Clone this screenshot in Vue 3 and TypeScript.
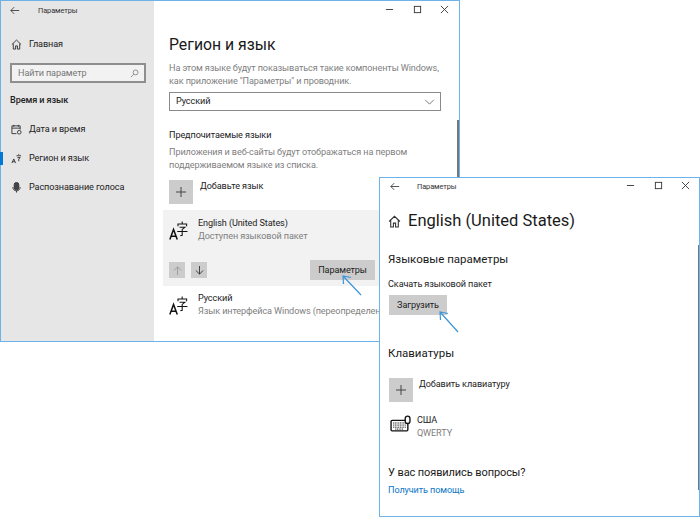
<script setup lang="ts">
    // two overlapping Windows 10 settings windows, with arrows pointing at the buttons

    interface NavItem {
        id: string;
        label: string;
        active?: boolean;
    }

    const navItems: NavItem[] = [
        { id: "date", label: "Дата и время" },
        { id: "region", label: "Регион и язык", active: true },
        { id: "voice", label: "Распознавание голоса" },
    ];
</script>

<template>
    <div class="desktop">
        <!-- back window -->
        <section class="window back">
            <aside class="sidebar">
                <div class="titlebar side-title">
                    <svg class="back-arrow" viewBox="0 0 12 10"><path d="M11 5H1M5 1 1 5l4 4" /></svg>
                    <span class="title-text">Параметры</span>
                </div>
                <div class="home-row">
                    <svg class="nav-icon" viewBox="0 0 12 12"><path d="M1 6 6 1.200 11 6M2.500 5v6h2.500V7.500h2V11h2.500V5" /></svg>
                    <span>Главная</span>
                </div>
                <div class="search">
                    <span>Найти параметр</span>
                    <svg viewBox="0 0 10 10"><circle cx="6.200" cy="3.800" r="2.700" /><path d="M4.200 5.800 1 9" /></svg>
                </div>
                <div class="group-title">Время и язык</div>
                <div v-for="item in navItems" :key="item.id" class="nav-item" :class="{ active: item.active }">
                    <svg v-if="item.id === 'date'" class="nav-icon" viewBox="0 0 12 12">
                        <path d="M6 10.500H1V2h9v4M1 4.500h9M3 1v2M8 1v2" />
                        <circle cx="9" cy="9" r="2" />
                    </svg>
                    <svg v-else-if="item.id === 'region'" class="nav-icon" viewBox="0 0 12 12">
                        <path d="M1 11 3 6.500 5 11M1.800 9.500h2.400M6 3h5M8.500 1v1M7 5h3L8.500 6.500V9" />
                    </svg>
                    <svg v-else class="nav-icon" viewBox="0 0 12 12">
                        <rect x="3.500" y="0.500" width="5" height="8" rx="2.500" fill="#444" />
                        <path d="M2 5.500c0 5.500 8 5.500 8 0M6 9.500V11.500" />
                    </svg>
                    <span>{{ item.label }}</span>
                </div>
            </aside>

            <main class="content">
                <div class="controls">
                    <svg viewBox="0 0 10 10"><path d="M1 5h8" /></svg>
                    <svg viewBox="0 0 10 10"><rect x="1.500" y="1.500" width="7" height="7" /></svg>
                    <svg viewBox="0 0 10 10"><path d="m1 1 8 8M9 1 1 9" /></svg>
                </div>
                <div class="scrollbar back-scroll"></div>
                <h1 class="page-title region">Регион и язык</h1>
                <p class="muted desc">На этом языке будут показываться такие компоненты Windows,<br />как приложение "Параметры" и проводник.</p>
                <div class="select">
                    <span>Русский</span>
                    <svg viewBox="0 0 12 7"><path d="M1 1l5 5 5-5" /></svg>
                </div>
                <h2 class="sub-title">Предпочитаемые языки</h2>
                <p class="muted desc second">Приложения и веб-сайты будут отображаться на первом<br />поддерживаемом языке из списка.</p>
                <div class="add-row">
                    <div class="plus-box"><svg viewBox="0 0 10 10"><path d="M5 0v10M0 5h10" /></svg></div>
                    <span>Добавьте язык</span>
                </div>
                <div class="lang selected">
                    <div class="lang-head">
                        <svg class="lang-icon" viewBox="0 0 18 18">
                            <path class="glyph-a" d="M.800 17.500 4.300 8 7.800 17.500M2 14.500h4.600" />
                            <path d="M12.500 .500v2M8.500 5V2.800h8.200V5M10 6h5l-2.500 2v5.500l-1.800 .5M7.800 10h9.700" />
                        </svg>
                        <div class="lang-text">
                            <div>English (United States)</div>
                            <div class="muted">Доступен языковой пакет</div>
                        </div>
                    </div>
                    <div class="lang-actions">
                        <div class="arrow-box disabled"><svg viewBox="0 0 10 10"><path d="M5 10V1M1 5l4-4 4 4" /></svg></div>
                        <div class="arrow-box"><svg viewBox="0 0 10 10"><path d="M5 0v9M1 5l4 4 4-4" /></svg></div>
                        <div class="btn options">Параметры</div>
                    </div>
                </div>
                <div class="lang plain">
                    <div class="lang-head">
                        <svg class="lang-icon" viewBox="0 0 18 18">
                            <path class="glyph-a" d="M.800 17.500 4.300 8 7.800 17.500M2 14.500h4.600" />
                            <path d="M12.500 .500v2M8.500 5V2.800h8.200V5M10 6h5l-2.500 2v5.500l-1.800 .5M7.800 10h9.700" />
                        </svg>
                        <div class="lang-text">
                            <div>Русский</div>
                            <div class="muted nowrap">Язык интерфейса Windows (переопределено)</div>
                        </div>
                    </div>
                </div>
            </main>
        </section>

        <!-- front window -->
        <section class="window front">
            <div class="titlebar front-title">
                <svg class="back-arrow" viewBox="0 0 12 10"><path d="M11 5H1M5 1 1 5l4 4" /></svg>
                <span class="title-text">Параметры</span>
                <div class="controls front-controls">
                    <svg viewBox="0 0 10 10"><path d="M1 5h8" /></svg>
                    <svg viewBox="0 0 10 10"><rect x="1.500" y="1.500" width="7" height="7" /></svg>
                    <svg viewBox="0 0 10 10"><path d="m1 1 8 8M9 1 1 9" /></svg>
                </div>
            </div>
            <div class="scrollbar front-scroll"></div>
            <div class="front-body">
                <div class="front-heading">
                    <svg viewBox="0 0 12 12"><path d="M1 6 6 1.200 11 6M2.500 5v6h2.500V7.500h2V11h2.500V5" /></svg>
                    <h1 class="page-title">English (United States)</h1>
                </div>
                <h2 class="section-title first">Языковые параметры</h2>
                <p class="label">Скачать языковой пакет</p>
                <div class="btn download">Загрузить</div>
                <h2 class="section-title keyboards">Клавиатуры</h2>
                <div class="add-row front-add">
                    <div class="plus-box"><svg viewBox="0 0 10 10"><path d="M5 0v10M0 5h10" /></svg></div>
                    <span>Добавить клавиатуру</span>
                </div>
                <div class="keyboard">
                    <svg viewBox="0 0 20 16">
                        <rect x="1" y="5" width="16" height="10" rx="1" />
                        <path class="keys" d="M3 7.500h12M3 9.500h12M3 11.500h12M5 13.300h8" />
                        <rect class="mouse" x="14.500" y="1" width="4.500" height="7" rx="2.200" />
                    </svg>
                    <div class="lang-text">
                        <div>США</div>
                        <div class="muted">QWERTY</div>
                    </div>
                </div>
                <h2 class="section-title questions">У вас появились вопросы?</h2>
                <div class="help-link">Получить помощь</div>
            </div>
        </section>

        <!-- hand drawn pointers -->
        <svg class="pointers" viewBox="0 0 700 517">
            <path d="M361 295 343 276M343.500 284 343 276 351 277.500" />
            <path d="M458 332 440 312M440.500 320 440 312 448 313.500" />
        </svg>
    </div>
</template>

<style scoped>
    .desktop {
        position: relative;
        width: 700px;
        height: 517px;
        overflow: hidden;
        background-color: #fff;
        font-family: Roboto, "Noto Sans", sans-serif;
        font-size: 9.100px;
        letter-spacing: -0.100px;
        line-height: 13px;
        color: #222;
    }

    .window {
        position: absolute;
        box-sizing: border-box;
        background-color: #fff;
        border: 1.500px solid #6db3ea;
    }

    .back {
        left: 0;
        top: 0;
        width: 460px;
        height: 342px;
        display: flex;
    }

    .front {
        left: 379px;
        top: 177px;
        width: 321px;
        height: 340px;
    }

    svg {
        fill: none;
        stroke: #333;
        stroke-width: 1;
        flex-shrink: 0;
    }

    p, h1, h2 {
        margin: 0;
        font-weight: 400;
    }

    .muted {
        color: #808080;
    }

    .nowrap {
        white-space: nowrap;
    }

    .titlebar {
        display: flex;
        align-items: center;
    }

    .back-arrow {
        width: 10px;
        height: 9px;
    }

    .title-text {
        font-size: 7.400px;
        color: #333;
    }

    /* sidebar */
    .sidebar {
        width: 153px;
        flex-shrink: 0;
        background-color: #e6e6e6;
    }

    .side-title {
        height: 18px;
        padding-left: 9px;
        gap: 18px;
    }

    .home-row {
        display: flex;
        align-items: center;
        gap: 7px;
        margin: 16px 0 0 10px;
        height: 18px;
    }

    .nav-icon {
        width: 11px;
        height: 11px;
    }

    .search {
        box-sizing: border-box;
        display: flex;
        align-items: center;
        justify-content: space-between;
        width: 136px;
        height: 20px;
        margin: 10px 0 0 9px;
        padding: 0 5px 0 6px;
        background-color: #f2f2f2;
        border: 2px solid #8e8e8e;
        color: #777;
    }

    .search svg {
        width: 9px;
        height: 9px;
        stroke: #888;
    }

    .group-title {
        margin: 11px 0 8px 9px;
        font-weight: 500;
    }

    .nav-item {
        display: flex;
        align-items: center;
        gap: 7px;
        height: 29px;
        padding-left: 10px;
    }

    .nav-item.active {
        position: relative;
    }

    .nav-item.active::before {
        content: "";
        position: absolute;
        left: -1px;
        top: 8px;
        width: 3px;
        height: 13px;
        background-color: #0078d7;
    }

    /* main column of the back window */
    .content {
        position: relative;
        flex: 1;
        min-width: 0;
        padding-left: 15px;
    }

    .controls {
        position: absolute;
        top: 4px;
        right: 10px;
        display: flex;
        gap: 18.500px;
    }

    .controls svg {
        width: 9px;
        height: 9px;
    }

    .scrollbar {
        position: absolute;
        width: 2px;
        background-color: #777;
    }

    .back-scroll {
        right: 0;
        top: 119px;
        height: 58px;
    }

    .page-title {
        font-size: 16.500px;
        letter-spacing: 0;
        line-height: 24px;
        color: #1a1a1a;
    }

    .content > .page-title {
        margin-top: 32px;
    }

    .page-title.region {
        font-size: 15.800px;
    }

    .desc {
        margin-top: 5px;
        white-space: nowrap;
    }

    .select {
        box-sizing: border-box;
        display: flex;
        align-items: center;
        justify-content: space-between;
        width: 272px;
        height: 19px;
        margin-top: 4px;
        padding: 0 5px 0 6px;
        border: 1.500px solid #8a8a8a;
    }

    .select svg {
        width: 11px;
        height: 6px;
        stroke: #666;
    }

    .sub-title {
        margin-top: 18px;
        font-size: 9.100px;
    }

    .desc.second {
        margin-top: 4px;
    }

    .add-row {
        display: flex;
        align-items: flex-start;
        gap: 6px;
        margin-top: 8px;
    }

    .plus-box {
        display: flex;
        align-items: center;
        justify-content: center;
        width: 24px;
        height: 24px;
        margin-right: 1px;
        background-color: #ccc;
    }

    .plus-box svg {
        width: 10px;
        height: 10px;
        stroke: #444;
    }

    .lang {
        margin-left: -6px;
        padding-left: 6px;
    }

    .selected {
        width: 230px;
        height: 76px;
        margin-top: 6px;
        background-color: #f2f2f2;
    }

    .lang-head {
        display: flex;
        align-items: center;
        gap: 10px;
    }

    .selected .lang-head {
        padding-top: 7px;
    }

    .plain .lang-head {
        padding-top: 6px;
    }

    .lang-icon {
        width: 19px;
        height: 19px;
        stroke: #111;
    }

    .glyph-a {
        stroke-width: 1.400;
    }

    .lang-text {
        line-height: 13px;
    }

    .lang-actions {
        display: flex;
        align-items: center;
        gap: 6px;
        margin-top: 17px;
    }

    .arrow-box {
        display: flex;
        align-items: center;
        justify-content: center;
        width: 16px;
        height: 16px;
        background-color: #ccc;
    }

    .arrow-box svg {
        width: 9px;
        height: 9px;
    }

    .arrow-box.disabled svg {
        stroke: #999;
    }

    .btn {
        display: flex;
        align-items: center;
        justify-content: center;
        height: 20px;
        background-color: #ccc;
        color: #222;
    }

    .options {
        width: 65px;
        margin-left: 97px;
    }

    /* front window */
    .front-title {
        position: relative;
        height: 17px;
        padding-left: 10px;
        gap: 17px;
    }

    .front-controls {
        top: 3px;
        right: 9px;
    }

    .front-scroll {
        right: 0;
        top: 67px;
        height: 245px;
        width: 1.500px;
    }

    .front-body {
        padding-left: 8px;
    }

    .front-heading {
        display: flex;
        align-items: center;
        gap: 7px;
        margin-top: 14px;
    }

    .front-heading svg {
        width: 13px;
        height: 13px;
    }

    .section-title {
        font-size: 11.500px;
        letter-spacing: 0;
        line-height: 16px;
        color: #1a1a1a;
    }

    .section-title.first {
        margin-top: 18px;
    }

    .label {
        margin-top: 11px;
    }

    .download {
        width: 58px;
        margin-top: 4px;
        margin-left: 1px;
    }

    .keyboards {
        margin-top: 30px;
    }

    .front-add {
        margin: 17px 0 0 1px;
    }

    .front-add .plus-box {
        margin-right: 0;
    }

    .keyboard {
        display: flex;
        align-items: flex-start;
        gap: 6px;
        margin: 12px 0 0 2px;
    }

    .keyboard svg {
        width: 21px;
        height: 17px;
        margin-top: 1px;
        stroke: #111;
        stroke-width: 1.300;
    }

    .keyboard .keys {
        stroke-dasharray: 1 .6;
        stroke-width: .9;
    }

    .keyboard .mouse {
        fill: #fff;
    }

    .questions {
        margin-top: 25px;
        font-size: 11px;
        letter-spacing: -0.100px;
    }

    .help-link {
        margin-top: 3px;
        color: #0a76c8;
    }

    .pointers {
        position: absolute;
        left: 0;
        top: 0;
        width: 700px;
        height: 517px;
        stroke: #3d96d8;
        stroke-width: 1.200;
        pointer-events: none;
    }
</style>
